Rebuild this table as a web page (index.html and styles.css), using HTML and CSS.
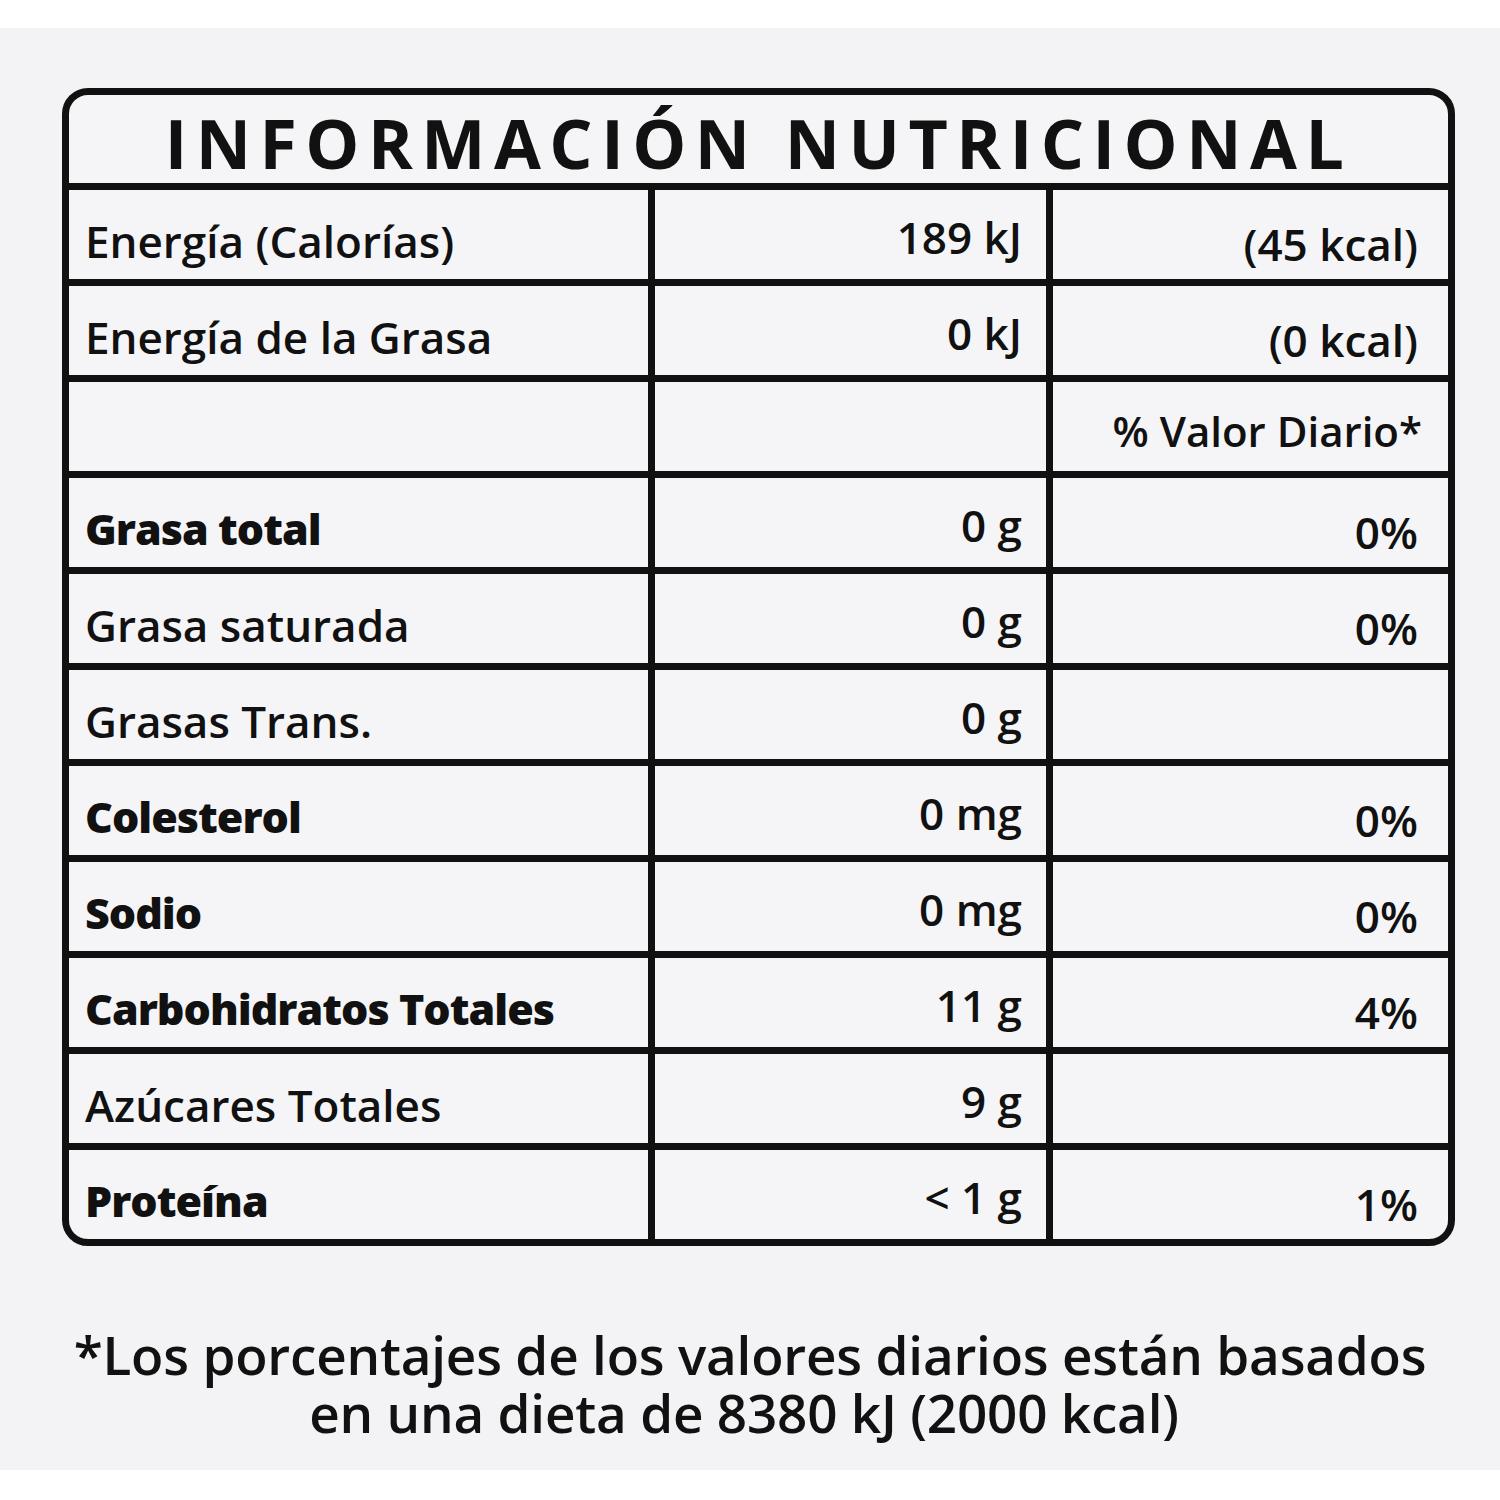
FILE: index.html
```html
<!DOCTYPE html>
<html lang="es">
<head>
<meta charset="utf-8">
<title>Información Nutricional</title>
<link rel="stylesheet" href="styles.css">
</head>
<body>
<div class="sheet">
  <div class="label">
    <div class="title">INFORMACIÓN NUTRICIONAL</div>
    <div class="grid">
      <div class="cell name">Energía (Calorías)</div>
      <div class="cell num">189 kJ</div>
      <div class="cell pct">(45 kcal)</div>

      <div class="cell name">Energía de la Grasa</div>
      <div class="cell num">0 kJ</div>
      <div class="cell pct">(0 kcal)</div>

      <div class="cell name"></div>
      <div class="cell num"></div>
      <div class="cell pct head">% Valor Diario*</div>

      <div class="cell name strong">Grasa total</div>
      <div class="cell num">0 g</div>
      <div class="cell pct">0%</div>

      <div class="cell name">Grasa saturada</div>
      <div class="cell num">0 g</div>
      <div class="cell pct">0%</div>

      <div class="cell name">Grasas Trans.</div>
      <div class="cell num">0 g</div>
      <div class="cell pct"></div>

      <div class="cell name strong">Colesterol</div>
      <div class="cell num">0 mg</div>
      <div class="cell pct">0%</div>

      <div class="cell name strong">Sodio</div>
      <div class="cell num">0 mg</div>
      <div class="cell pct">0%</div>

      <div class="cell name strong">Carbohidratos Totales</div>
      <div class="cell num">11 g</div>
      <div class="cell pct">4%</div>

      <div class="cell name">Azúcares Totales</div>
      <div class="cell num">9 g</div>
      <div class="cell pct"></div>

      <div class="cell name strong">Proteína</div>
      <div class="cell num">&lt; 1 g</div>
      <div class="cell pct">1%</div>
    </div>
  </div>
  <div class="note">
    <div class="note-line">*Los porcentajes de los valores diarios están basados</div>
    <div class="note-line">en una dieta de 8380 kJ (2000 kcal)</div>
  </div>
</div>
</body>
</html>
```

FILE: styles.css
```css
html, body {
  margin: 0;
  padding: 0;
  background: #ffffff;
}
body {
  font-family: "Open Sans", "DejaVu Sans", sans-serif;
  color: #111111;
  width: 1500px;
  height: 1500px;
}
.sheet {
  margin-top: 28px;
  height: 1442px;
  background: #f3f3f5;
  padding-top: 60px;
  box-sizing: border-box;
}
.label {
  margin-left: 62px;
  width: 1393px;
  box-sizing: border-box;
  border: 7px solid #111111;
  border-radius: 26px;
  background: #f5f5f7;
  overflow: hidden;
}
.title {
  height: 95px;
  border-bottom: 7px solid #111111;
  display: flex;
  align-items: center;
  justify-content: center;
  font-weight: 700;
  font-size: 68px;
  letter-spacing: 8.5px;
  padding-top: 6px;
  box-sizing: border-box;
}
.grid {
  display: grid;
  grid-template-columns: 579px 391px 1fr;
  grid-auto-rows: 89px;
  gap: 7px;
  background: #111111;
}
.cell {
  background: #f5f5f7;
  display: flex;
  align-items: center;
  font-size: 44px;
  font-weight: 600;
  padding-top: 12px;
  box-sizing: border-box;
}
.name {
  padding-left: 16px;
}
.strong {
  font-weight: 800;
  font-size: 43px;
  letter-spacing: -1px;
}
.num {
  justify-content: flex-end;
  padding-right: 24px;
  padding-top: 4px;
}
.pct {
  justify-content: flex-end;
  padding-right: 30px;
  padding-top: 18px;
}
.head {
  font-size: 42px;
  padding-right: 26px;
  padding-top: 8px;
}
.note {
  margin-top: 80px;
  display: flex;
  flex-direction: column;
  align-items: center;
  font-size: 53px;
  font-weight: 600;
  letter-spacing: -0.2px;
}
.note-line {
  height: 58px;
  line-height: 58px;
}
.note-line + .note-line {
  margin-left: -12px;
}
```
